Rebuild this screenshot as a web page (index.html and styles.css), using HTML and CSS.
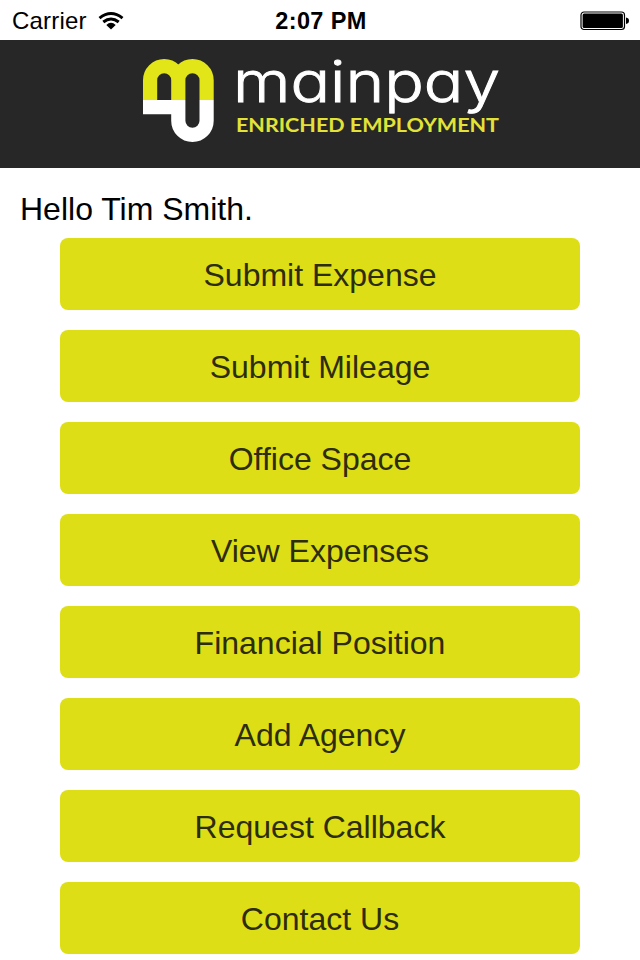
FILE: index.html
```html
<!DOCTYPE html>
<html lang="en">
<head>
<meta charset="utf-8">
<meta name="viewport" content="width=device-width">
<title>Mainpay</title>
<link rel="stylesheet" href="styles.css">
</head>
<body>
<div class="status">
  <div class="carrier"><span>Carrier</span>
    <svg class="wifi" width="26" height="18" viewBox="0 0 26 18" fill="none" stroke="#000" stroke-width="3">
      <path d="M1.5 6.1Q13-3 24.5 6.1"/>
      <path d="M5.3 10Q13 3.9 20.7 10"/>
      <path d="M8.3 13Q13 8.6 17.7 13L13 17.6Z" fill="#000" stroke="none"/>
    </svg>
  </div>
  <time class="clock">2:07 PM</time>
  <svg class="battery" width="50" height="20" viewBox="0 0 50 20">
    <rect x="1" y="1" width="43.5" height="17.5" rx="3" fill="none" stroke="#000" stroke-width="1.2"/>
    <rect x="2.6" y="2.6" width="40.3" height="14.3" rx="1.5" fill="#000"/>
    <path d="M46 6.5Q49 7 49 9.8T46 13Z" fill="#000"/>
  </svg>
</div>
<header class="brand">
  <svg width="380" height="118" viewBox="141 50 380 118" role="img" aria-label="mainpay enriched employment">
    <g fill="none" stroke-width="14.2">
      <path stroke="#e2e619" d="M150.1 100V80.2a14.1 14.1 0 0 1 28.2 0V100M178.3 100V80.2a14.1 14.1 0 0 1 28.3 0V100"/>
      <path stroke="#fff" d="M143 107.2h35.3M178.3 100v20.7a14.1 14.1 0 0 0 28.3 0V100"/>
    </g>
    <text class="wordmark" x="233" y="102" textLength="267" lengthAdjust="spacingAndGlyphs">mainpay</text>
    <text class="tagline" x="236" y="132" textLength="263" lengthAdjust="spacingAndGlyphs">ENRICHED EMPLOYMENT</text>
  </svg>
</header>
<main>
  <p class="greeting">Hello Tim Smith.</p>
  <nav class="menu">
    <button>Submit Expense</button>
    <button>Submit Mileage</button>
    <button>Office Space</button>
    <button>View Expenses</button>
    <button>Financial Position</button>
    <button>Add Agency</button>
    <button>Request Callback</button>
    <button>Contact Us</button>
  </nav>
</main>
</body>
</html>
```

FILE: styles.css
```css
* { box-sizing: border-box; }
body {
  margin: 0;
  height: 960px;
  overflow: hidden;
  background: #fff;
  color: #000;
  font-family: "Liberation Sans", Arial, sans-serif;
}
.status {
  height: 40px;
  padding: 2px 10px 0 12px;
  display: grid;
  grid-template-columns: 1fr auto 1fr;
  align-items: center;
  font-size: 24px;
  line-height: 38px;
}
.carrier { display: flex; align-items: center; gap: 11px; letter-spacing: 0.2px; }
.clock { font-weight: 700; font-size: 23.5px; letter-spacing: 0.4px; }
.battery { justify-self: end; }
.brand {
  height: 128px;
  padding: 10px 0 0 141px;
  background: #272727;
}
.brand svg { display: block; overflow: visible; }
.wordmark {
  font-family: Inter, sans-serif;
  font-weight: 300;
  font-size: 56px;
  font-feature-settings: "cv11";
  fill: #fff;
  stroke: #fff;
  stroke-width: 0.9px;
}
.tagline {
  font-family: Lato, sans-serif;
  font-weight: 700;
  font-size: 18.5px;
  fill: #e2e336;
}
.greeting {
  margin: 0;
  height: 70px;
  padding: 23px 20px 0;
  font-size: 32px;
  line-height: 36px;
}
.menu {
  display: flex;
  flex-direction: column;
  gap: 20px;
  padding: 0 60px;
}
.menu button {
  height: 72px;
  padding: 2px 0 0;
  border: 0;
  border-radius: 8px;
  background: #dede17;
  color: #2d2d0c;
  font: 32px/36px "Liberation Sans", Arial, sans-serif;
}
```
